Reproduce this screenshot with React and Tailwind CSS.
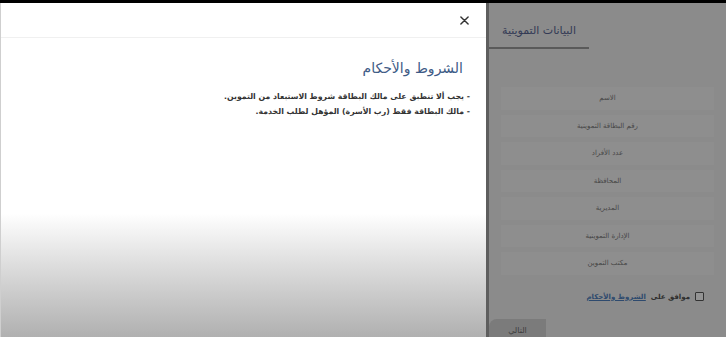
export default function App() {
  const fields = [
    'الاسم',
    'رقم البطاقة التموينية',
    'عدد الأفراد',
    'المحافظة',
    'المديرية',
    'الإدارة التموينية',
    'مكتب التموين',
  ];

  return (
    <div
      className="w-[726px] h-[337px] overflow-hidden flex flex-col bg-black"
      style={{ fontFamily: '"DejaVu Sans", "Noto Sans", sans-serif' }}
    >
      <div className="h-[3px] bg-black" />
      <div className="flex-1 flex min-h-0">
        {/* Modal panel */}
        <div className="w-[489px] h-full flex flex-col bg-gradient-to-b from-white from-[63%] to-[#b0b0b0] border-l border-[#cfcfcf] border-r-[3px] border-r-[#5e5e5e]">
          <div className="h-[35px] flex items-center justify-end pr-[17px] border-b border-[#f0f0f0]">
            <svg width="9" height="9" viewBox="0 0 10 10" className="text-[#333]">
              <path d="M1 1L9 9M9 1L1 9" stroke="currentColor" strokeWidth="1.6" strokeLinecap="round" />
            </svg>
          </div>
          <div dir="rtl" className="pr-[21px] pt-[20px]">
            <h2 className="text-[14px] leading-[20px] text-[#3e5b86] pr-[2px]">الشروط والأحكام</h2>
            <div className="mt-[11px] -mr-[5px] text-[7.8px] leading-[15px] font-bold text-[#333]">
              <p>- يجب ألا تنطبق على مالك البطاقة شروط الاستبعاد من التموين.</p>
              <p>- مالك البطاقة فقط (رب الأسرة) المؤهل لطلب الخدمة.</p>
            </div>
          </div>
        </div>

        {/* Dimmed page behind */}
        <div dir="rtl" className="flex-1 h-full bg-[#8b8b8b] flex flex-col">
          <div className="h-[46px] flex justify-end">
            <div className="w-[100px] h-full flex flex-col justify-end border-b-2 border-[#5a5a5a]">
              <div className="text-[11px] text-[#333a55] text-center pb-[8px]">البيانات التموينية</div>
            </div>
          </div>
          <div className="mt-[38px] mx-[12px] flex flex-col gap-[5px]">
            {fields.map((f) => (
              <div key={f} className="h-[22.5px] flex items-center justify-center bg-[#8e8e8e] text-[7px] text-[#474747]">
                {f}
              </div>
            ))}
          </div>
          <div className="mt-[17px] mr-[22px] flex items-center gap-[5px]">
            <div className="w-[9px] h-[9px] border border-[#333] rounded-[1px] bg-[#939393]" />
            <span className="text-[7px] font-bold text-[#2e2e2e]">موافق على</span>
            <span className="text-[7px] font-bold text-[#2e4a6e] underline">الشروط والأحكام</span>
          </div>
          <div className="mt-auto flex justify-end">
            <div className="w-[57px] h-[18px] bg-[#7b7b7b] rounded-tl-[8px] flex items-end justify-center text-[8px] text-[#3e3e3e]">
              التالي
            </div>
          </div>
        </div>
      </div>
    </div>
  );
}
